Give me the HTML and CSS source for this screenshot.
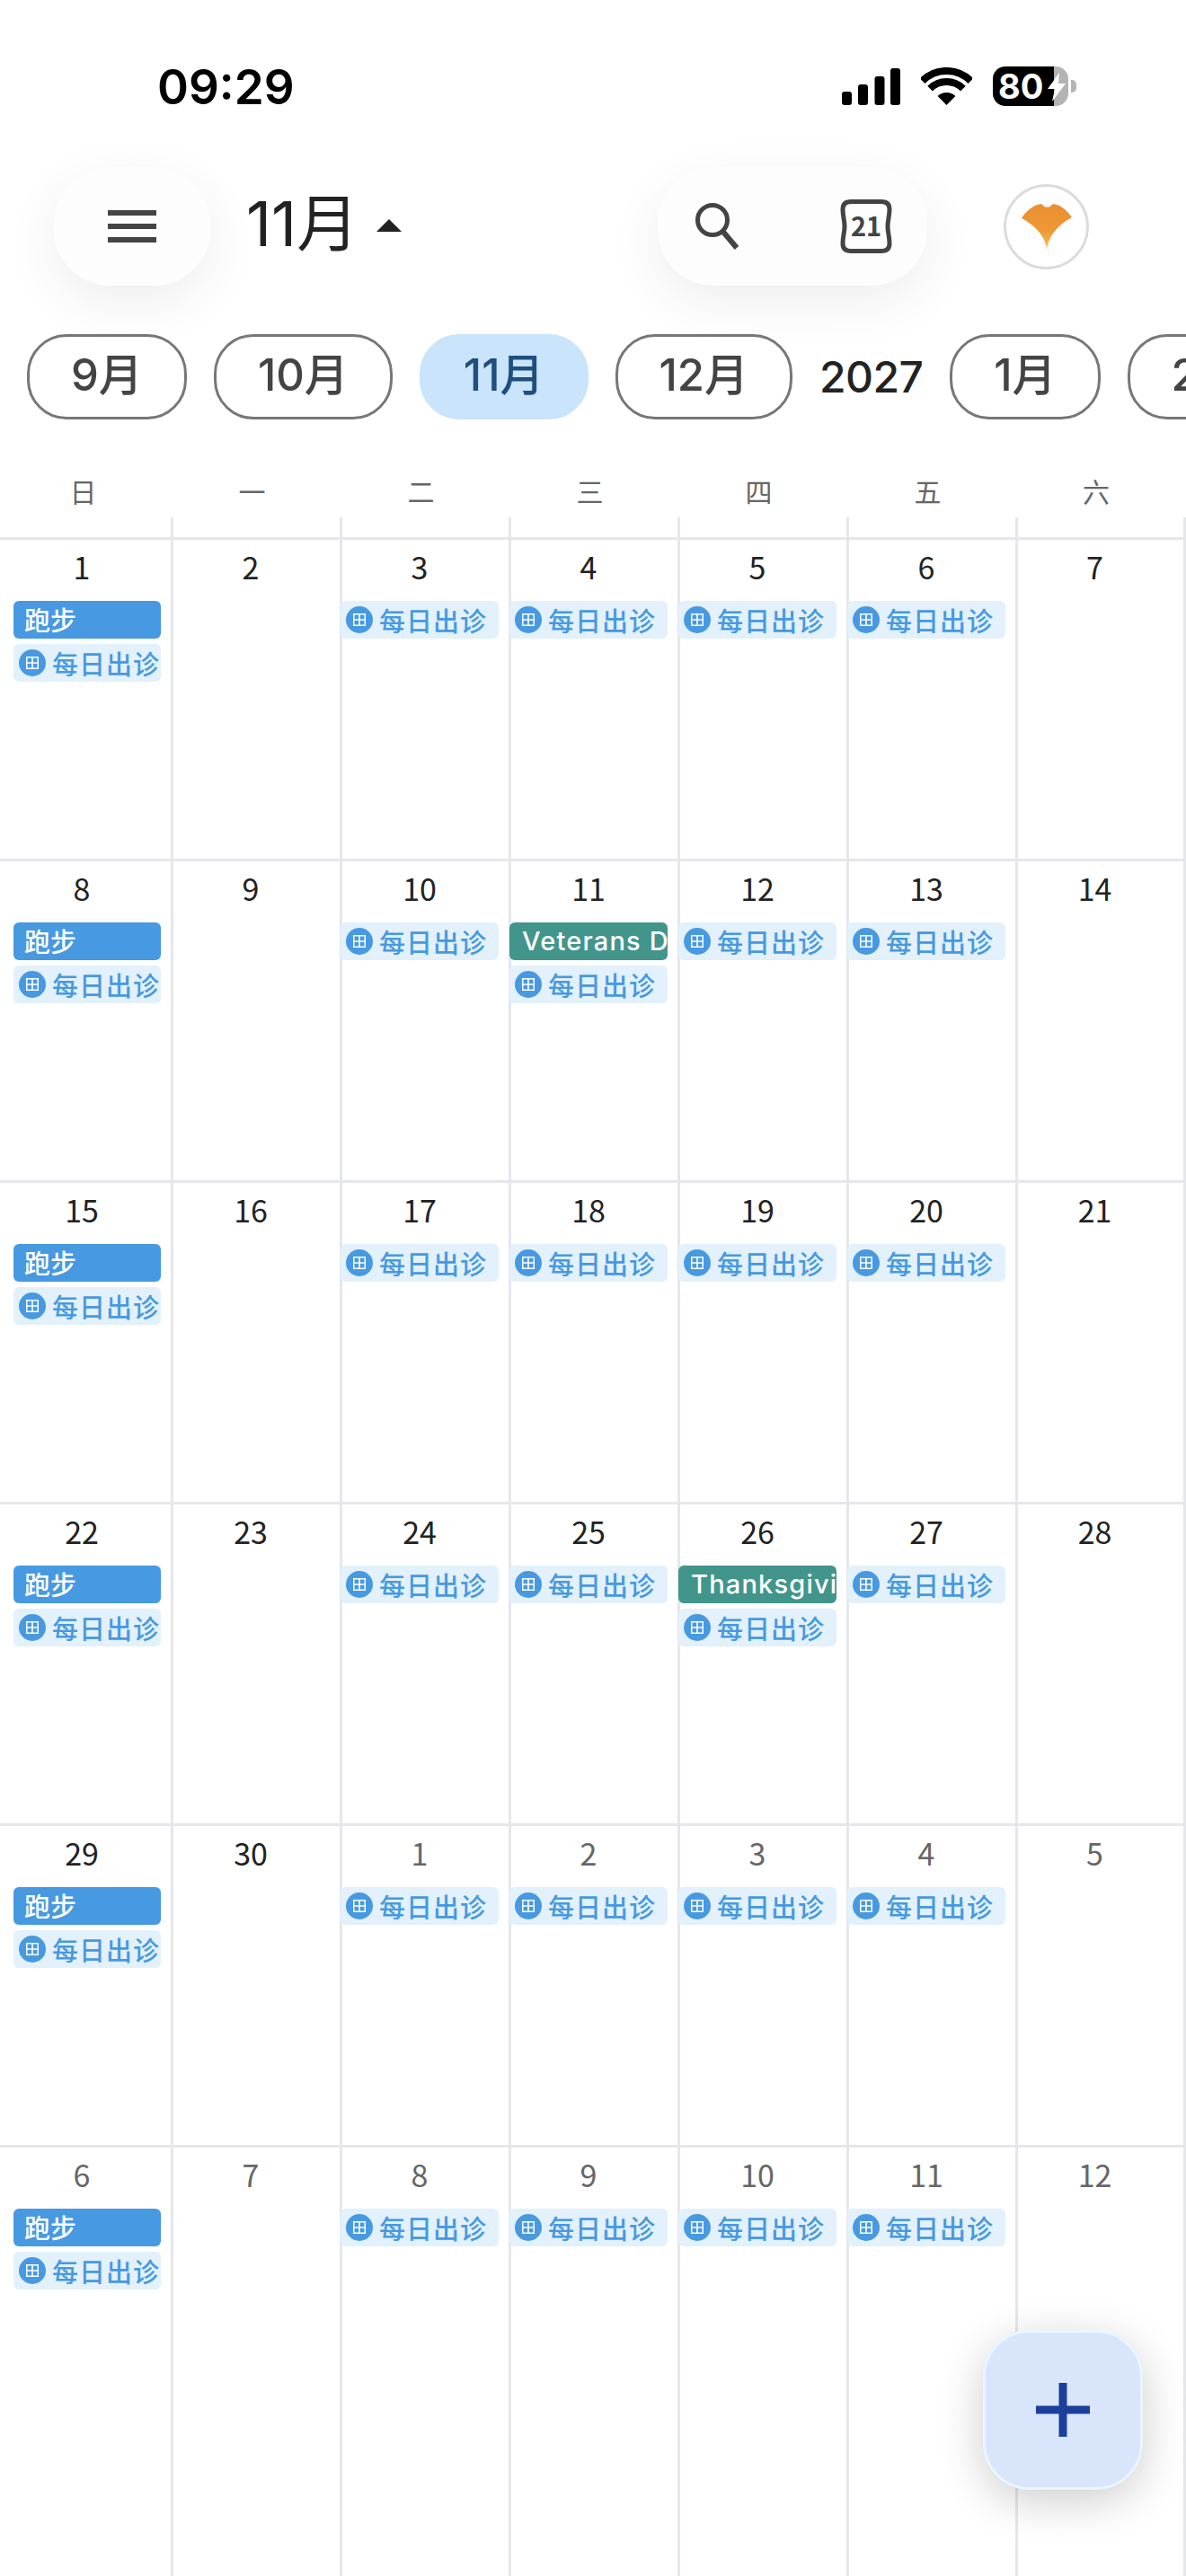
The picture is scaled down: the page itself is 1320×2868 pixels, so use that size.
FILE: index.html
```html
<!DOCTYPE html>
<html lang="zh-CN">
<head>
    <meta charset="UTF-8">
    <meta name="viewport" content="width=device-width, initial-scale=1.0">
    <title>日历</title>
    <link rel="stylesheet" href="styles.css">
</head>
<body>
    <svg class="defs" width="0" height="0">
        <symbol id="clinic" viewBox="0 0 30 30">
            <circle cx="15" cy="15" r="15" fill="#4799e1"/>
            <rect x="8" y="8" width="14" height="14" fill="#fff"/>
            <path d="M9.500 9.500h4.700v4.700h-4.700zM15.800 9.500h4.700v4.700h-4.700zM9.500 15.800h4.700v4.700h-4.700zM15.800 15.800h4.700v4.700h-4.700z" fill="#4799e1"/>
        </symbol>
    </svg>

    <div class="status-bar">
        <span class="time">09:29</span>
        <div class="status-icons">
            <svg width="65" height="41" viewBox="0 0 65 41">
                <rect x="0" y="26" width="11" height="15" rx="3"/>
                <rect x="18" y="18" width="11" height="23" rx="3"/>
                <rect x="36.5" y="9" width="11" height="32" rx="3"/>
                <rect x="54" y="0" width="11" height="41" rx="3"/>
            </svg>
            <svg class="wifi" width="57" height="42" viewBox="0 0 57 42">
                <path d="M1.6 15.1A38 38 0 0 1 55.4 15.1M10.1 23.6A26 26 0 0 1 46.9 23.6" fill="none" stroke="#000" stroke-width="8"/>
                <path d="M28.5 42L18.6 32.1A14 14 0 0 1 38.4 32.1Z"/>
            </svg>
            <div class="battery">
                <span class="battery-level">80</span>
                <svg class="bolt" width="22" height="32" viewBox="0 0 22 32">
                    <path d="M14 0L1 18h8L6 32 21 12h-8z" fill="#fff"/>
                </svg>
            </div>
            <div class="battery-cap"></div>
        </div>
    </div>

    <div class="header">
        <div class="round-box menu-box">
            <div class="burger"><span></span><span></span><span></span></div>
        </div>
        <div class="title">11月</div>
        <div class="title-arrow"></div>
        <div class="round-box tools-box">
            <svg width="52" height="52" viewBox="0 0 52 52">
                <circle cx="19" cy="19" r="16.5" fill="none" stroke="#444" stroke-width="5"/>
                <path d="M30 31L46 50" stroke="#444" stroke-width="6" fill="none"/>
            </svg>
            <svg width="60" height="62" viewBox="0 0 60 62">
                <path d="M13 3.5H47C53 3.5 56 6.500 56 12C56 20 54 24 54 31C54 38 56 42 56 50C56 55.500 53 58.500 47 58.500H13C7 58.500 4 55.500 4 50C4 42 6 38 6 31C6 24 4 20 4 12C4 6.500 7 3.500 13 3.500Z" fill="none" stroke="#444" stroke-width="5"/>
                <text x="30" y="42" class="cal-day">21</text>
            </svg>
        </div>
        <div class="avatar">
            <svg width="56" height="51" viewBox="0 0 56 51">
                <defs>
                    <linearGradient id="leaf" x1="0" y1="0" x2="0" y2="1">
                        <stop offset="0" stop-color="#ea8e32"/>
                        <stop offset="0.6" stop-color="#ef9a36"/>
                        <stop offset="1" stop-color="#f6bf4c"/>
                    </linearGradient>
                </defs>
                <path d="M28 51C26.500 36 15 24 0 16C5 8 13 1 22 0L26 3.500H31L35 0C44 1 51 8 56 15C41 23 29.500 36 28 51Z" fill="url(#leaf)"/>
            </svg>
        </div>
    </div>

    <div class="months">
        <div class="month">9月</div>
        <div class="month">10月</div>
        <div class="month active">11月</div>
        <div class="month">12月</div>
        <div class="year">2027</div>
        <div class="month">1月</div>
        <div class="month">2月</div>
    </div>

    <div class="week-head">
        <div class="wd"><span>日</span><i></i></div>
        <div class="wd"><span>一</span><i></i></div>
        <div class="wd"><span>二</span><i></i></div>
        <div class="wd"><span>三</span><i></i></div>
        <div class="wd"><span>四</span><i></i></div>
        <div class="wd"><span>五</span><i></i></div>
        <div class="wd"><span>六</span><i></i></div>
    </div>

    <div class="grid">
        <!-- week 1 -->
        <div class="day"><div class="num">1</div><div class="chip run">跑步</div><div class="chip clinic"><svg><use href="#clinic"/></svg>每日出诊</div></div>
        <div class="day"><div class="num">2</div></div>
        <div class="day"><div class="num">3</div><div class="chip clinic"><svg><use href="#clinic"/></svg>每日出诊</div></div>
        <div class="day"><div class="num">4</div><div class="chip clinic"><svg><use href="#clinic"/></svg>每日出诊</div></div>
        <div class="day"><div class="num">5</div><div class="chip clinic"><svg><use href="#clinic"/></svg>每日出诊</div></div>
        <div class="day"><div class="num">6</div><div class="chip clinic"><svg><use href="#clinic"/></svg>每日出诊</div></div>
        <div class="day"><div class="num">7</div></div>
        <!-- week 2 -->
        <div class="day"><div class="num">8</div><div class="chip run">跑步</div><div class="chip clinic"><svg><use href="#clinic"/></svg>每日出诊</div></div>
        <div class="day"><div class="num">9</div></div>
        <div class="day"><div class="num">10</div><div class="chip clinic"><svg><use href="#clinic"/></svg>每日出诊</div></div>
        <div class="day"><div class="num">11</div><div class="chip holiday">Veterans Day</div><div class="chip clinic"><svg><use href="#clinic"/></svg>每日出诊</div></div>
        <div class="day"><div class="num">12</div><div class="chip clinic"><svg><use href="#clinic"/></svg>每日出诊</div></div>
        <div class="day"><div class="num">13</div><div class="chip clinic"><svg><use href="#clinic"/></svg>每日出诊</div></div>
        <div class="day"><div class="num">14</div></div>
        <!-- week 3 -->
        <div class="day"><div class="num">15</div><div class="chip run">跑步</div><div class="chip clinic"><svg><use href="#clinic"/></svg>每日出诊</div></div>
        <div class="day"><div class="num">16</div></div>
        <div class="day"><div class="num">17</div><div class="chip clinic"><svg><use href="#clinic"/></svg>每日出诊</div></div>
        <div class="day"><div class="num">18</div><div class="chip clinic"><svg><use href="#clinic"/></svg>每日出诊</div></div>
        <div class="day"><div class="num">19</div><div class="chip clinic"><svg><use href="#clinic"/></svg>每日出诊</div></div>
        <div class="day"><div class="num">20</div><div class="chip clinic"><svg><use href="#clinic"/></svg>每日出诊</div></div>
        <div class="day"><div class="num">21</div></div>
        <!-- week 4 -->
        <div class="day"><div class="num">22</div><div class="chip run">跑步</div><div class="chip clinic"><svg><use href="#clinic"/></svg>每日出诊</div></div>
        <div class="day"><div class="num">23</div></div>
        <div class="day"><div class="num">24</div><div class="chip clinic"><svg><use href="#clinic"/></svg>每日出诊</div></div>
        <div class="day"><div class="num">25</div><div class="chip clinic"><svg><use href="#clinic"/></svg>每日出诊</div></div>
        <div class="day"><div class="num">26</div><div class="chip holiday">Thanksgiving</div><div class="chip clinic"><svg><use href="#clinic"/></svg>每日出诊</div></div>
        <div class="day"><div class="num">27</div><div class="chip clinic"><svg><use href="#clinic"/></svg>每日出诊</div></div>
        <div class="day"><div class="num">28</div></div>
        <!-- week 5 -->
        <div class="day"><div class="num">29</div><div class="chip run">跑步</div><div class="chip clinic"><svg><use href="#clinic"/></svg>每日出诊</div></div>
        <div class="day"><div class="num">30</div></div>
        <div class="day other"><div class="num">1</div><div class="chip clinic"><svg><use href="#clinic"/></svg>每日出诊</div></div>
        <div class="day other"><div class="num">2</div><div class="chip clinic"><svg><use href="#clinic"/></svg>每日出诊</div></div>
        <div class="day other"><div class="num">3</div><div class="chip clinic"><svg><use href="#clinic"/></svg>每日出诊</div></div>
        <div class="day other"><div class="num">4</div><div class="chip clinic"><svg><use href="#clinic"/></svg>每日出诊</div></div>
        <div class="day other"><div class="num">5</div></div>
        <!-- week 6 -->
        <div class="day other last"><div class="num">6</div><div class="chip run">跑步</div><div class="chip clinic"><svg><use href="#clinic"/></svg>每日出诊</div></div>
        <div class="day other last"><div class="num">7</div></div>
        <div class="day other last"><div class="num">8</div><div class="chip clinic"><svg><use href="#clinic"/></svg>每日出诊</div></div>
        <div class="day other last"><div class="num">9</div><div class="chip clinic"><svg><use href="#clinic"/></svg>每日出诊</div></div>
        <div class="day other last"><div class="num">10</div><div class="chip clinic"><svg><use href="#clinic"/></svg>每日出诊</div></div>
        <div class="day other last"><div class="num">11</div><div class="chip clinic"><svg><use href="#clinic"/></svg>每日出诊</div></div>
        <div class="day other last"><div class="num">12</div></div>
    </div>

    <button class="fab">
        <svg width="60" height="60" viewBox="0 0 60 60">
            <path d="M30 0V60M0 30H60" stroke="#1c409a" stroke-width="9"/>
        </svg>
    </button>
</body>
</html>
```

FILE: styles.css
```css
* {
    box-sizing: border-box;
}

html, body {
    width: 1320px;
    height: 2868px;
}

body {
    margin: 0;
    position: relative;
    overflow: hidden;
    background: #fff;
    color: #222;
    font-family: "Noto Sans CJK SC", "Noto Sans", sans-serif;
}

.defs {
    position: absolute;
}

/* status bar */
.status-bar {
    height: 186px;
    display: flex;
    justify-content: space-between;
    padding: 74px 122px 0 175px;
}

.time {
    font-family: Inter, sans-serif;
    font-size: 53px;
    font-weight: 600;
    line-height: 46px;
    color: #000;
}

.status-icons {
    display: flex;
    align-items: center;
    align-self: flex-start;
    height: 44px;
}

.wifi {
    margin-left: 23px;
    margin-right: 23px;
}

.battery {
    position: relative;
    width: 84px;
    height: 44px;
    border-radius: 14px;
    background: linear-gradient(90deg, #000 68px, #b4b4b4 68px);
    padding-left: 6px;
    overflow: hidden;
}

.battery-level {
    font-family: Inter, sans-serif;
    font-size: 38px;
    font-weight: 700;
    line-height: 44px;
    color: #fff;
}

.bolt {
    position: absolute;
    left: 60px;
    top: 7px;
}

.battery-cap {
    width: 6px;
    height: 14px;
    margin-left: 3px;
    border-radius: 0 5px 5px 0;
    background: #b4b4b4;
}

/* header */
.header {
    height: 132px;
    display: flex;
    align-items: center;
    padding-left: 60px;
}

.round-box {
    flex: none;
    height: 132px;
    display: flex;
    align-items: center;
    border-radius: 62px;
    background: #fdfdfd;
    box-shadow: 0 18px 60px rgba(0, 0, 0, 0.07);
}

.menu-box {
    width: 174px;
    justify-content: center;
}

.burger {
    width: 54px;
    display: flex;
    flex-direction: column;
    gap: 9px;
}

.burger span {
    height: 6px;
    background: #444;
}

.title {
    flex: none;
    width: 145px;
    margin-left: 40px;
    margin-top: -6px;
    font-family: Inter, "Noto Sans CJK SC", sans-serif;
    font-size: 69px;
    line-height: 80px;
    color: #222;
}

.title-arrow {
    flex: none;
    margin-left: 0;
    margin-top: -2px;
    width: 0;
    height: 0;
    border-left: 14px solid transparent;
    border-right: 14px solid transparent;
    border-bottom: 14px solid #222;
}

.tools-box {
    width: 300px;
    margin-left: 285px;
    padding-left: 42px;
    gap: 108px;
}

.cal-day {
    font-size: 29px;
    font-weight: 700;
    fill: #444;
    text-anchor: middle;
}

.avatar {
    flex: none;
    width: 95px;
    height: 95px;
    margin-left: 85px;
    border: 3px solid #dcdcdc;
    border-radius: 50%;
    background: #fff;
    display: flex;
    align-items: center;
    justify-content: center;
}

/* month strip */
.months {
    margin-top: 54px;
    height: 95px;
    display: flex;
    align-items: center;
    gap: 30px;
    padding-left: 30px;
    width: 1320px;
    overflow: hidden;
}

.month {
    flex: none;
    height: 95px;
    padding: 0 46px;
    border: 3px solid #777;
    border-radius: 44px;
    font-family: Inter, "Noto Sans CJK SC", sans-serif;
    font-size: 49px;
    font-weight: 500;
    line-height: 86px;
    color: #444;
}

.month.active {
    background: #c9e4fb;
    border-color: #c9e4fb;
    color: #1f4f7c;
}

.year {
    flex: none;
    font-family: Inter, sans-serif;
    font-size: 48px;
    font-weight: 500;
    letter-spacing: -0.6px;
    color: #222;
}

/* calendar */
.week-head,
.grid {
    display: grid;
    grid-template-columns: 193px repeat(5, 188px) 187px;
}

.week-head {
    margin-top: 53px;
    height: 81px;
    border-bottom: 3px solid #e6e7ec;
}

.wd {
    display: flex;
    flex-direction: column;
}

.wd span {
    height: 56px;
    padding-right: 13px;
    font-size: 30px;
    line-height: 52px;
    text-align: center;
    color: #666;
}

.wd:first-child span {
    padding-left: 5px;
}

.wd i {
    display: block;
    width: 3px;
    height: 22px;
    align-self: flex-end;
    background: #e6e7ec;
}

.day {
    height: 358px;
    padding-right: 13px;
    border-right: 3px solid #e6e7ec;
    border-bottom: 3px solid #e6e7ec;
}

.day.last {
    height: 500px;
}

.day:nth-child(7n+1) {
    padding-left: 5px;
}

.num {
    height: 68px;
    font-size: 34px;
    line-height: 60px;
    text-align: center;
    color: #222;
}

.other .num {
    color: #666;
}

.chip {
    height: 42px;
    margin: 0 -2px 6px;
    border-radius: 6px;
    overflow: hidden;
    white-space: nowrap;
    line-height: 40px;
    font-size: 28px;
    font-weight: 500;
}

.day:nth-child(7n+1) .chip {
    margin-left: 10px;
}

.run {
    padding-left: 12px;
    background: #4799e1;
    color: #fff;
    font-size: 29px;
}

.holiday {
    padding-left: 14px;
    background: #42958a;
    color: #fff;
    font-family: Inter, sans-serif;
    font-size: 29px;
    line-height: 42px;
    letter-spacing: 1.2px;
}

.clinic {
    display: flex;
    align-items: center;
    gap: 7px;
    padding-left: 6px;
    background: #e2f1fb;
    color: #4799e1;
    font-size: 29px;
    letter-spacing: 1px;
}

.clinic svg {
    flex: none;
    width: 30px;
    height: 30px;
}

/* add button */
.fab {
    position: absolute;
    left: 1094px;
    top: 2594px;
    width: 178px;
    height: 178px;
    padding: 0;
    display: flex;
    align-items: center;
    justify-content: center;
    border: 3px solid #eaf6ff;
    border-radius: 52px;
    background: #d8e5fb;
    box-shadow: 0 12px 50px rgba(0, 0, 0, 0.2);
}
```
